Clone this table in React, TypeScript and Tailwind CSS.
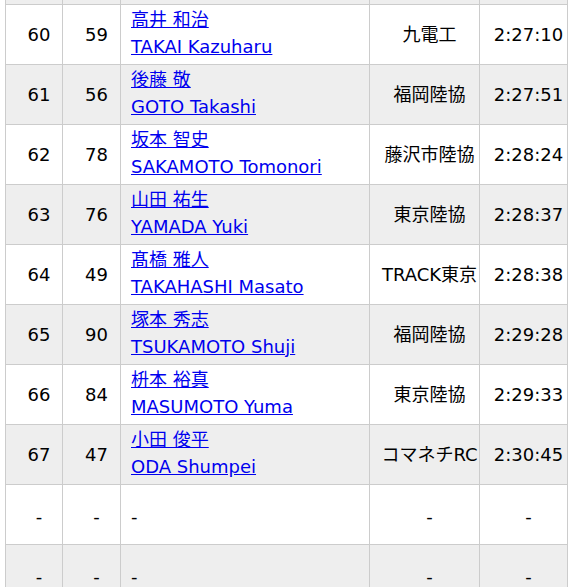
type Row = {
  place: string;
  bib: string;
  ja?: string;
  en?: string;
  team: string;
  time: string;
};

const rows: Row[] = [
  { place: '60', bib: '59', ja: '高井 和治', en: 'TAKAI Kazuharu', team: '九電工', time: '2:27:10' },
  { place: '61', bib: '56', ja: '後藤 敬', en: 'GOTO Takashi', team: '福岡陸協', time: '2:27:51' },
  { place: '62', bib: '78', ja: '坂本 智史', en: 'SAKAMOTO Tomonori', team: '藤沢市陸協', time: '2:28:24' },
  { place: '63', bib: '76', ja: '山田 祐生', en: 'YAMADA Yuki', team: '東京陸協', time: '2:28:37' },
  { place: '64', bib: '49', ja: '髙橋 雅人', en: 'TAKAHASHI Masato', team: 'TRACK東京', time: '2:28:38' },
  { place: '65', bib: '90', ja: '塚本 秀志', en: 'TSUKAMOTO Shuji', team: '福岡陸協', time: '2:29:28' },
  { place: '66', bib: '84', ja: '枡本 裕真', en: 'MASUMOTO Yuma', team: '東京陸協', time: '2:29:33' },
  { place: '67', bib: '47', ja: '小田 俊平', en: 'ODA Shumpei', team: 'コマネチRC', time: '2:30:45' },
  { place: '-', bib: '-', team: '-', time: '-' },
  { place: '-', bib: '-', team: '-', time: '-' },
];

const font = { fontFamily: '"DejaVu Sans", "Noto Sans CJK JP", sans-serif' };

export default function App() {
  return (
    <div className="min-h-screen bg-white text-[18px] leading-[27px] text-black" style={font}>
      <div className="ml-[5px] grid w-fit grid-cols-[56px_57px_248px_109px_87px] grid-rows-[4px] auto-rows-[59px] gap-px bg-[#ccc] px-px pb-px">
        {/* tail of the previous row */}
        <div className="bg-[#eee]" />
        <div className="bg-[#eee]" />
        <div className="bg-[#eee]" />
        <div className="bg-[#eee]" />
        <div className="bg-[#eee]" />

        {rows.map((r, i) => {
          const bg = i % 2 === 0 ? 'bg-white' : 'bg-[#eee]';
          const dash = !r.en;
          const cell = `${bg} flex items-center justify-center pl-[10px] ${dash ? 'pt-[3px]' : ''}`;
          return [
            <div key={`${i}-p`} className={cell}>{r.place}</div>,
            <div key={`${i}-b`} className={cell}>{r.bib}</div>,
            dash ? (
              <div key={`${i}-n`} className={`${bg} flex items-center pl-[10px] pt-[3px]`}>-</div>
            ) : (
              <div key={`${i}-n`} className={`${bg} flex flex-col justify-center pl-[10px] pb-[4px]`}>
                <a href="#" className="w-fit text-[#0000ee] underline">{r.ja}</a>
                <a href="#" className="w-fit text-[#0000ee] underline">{r.en}</a>
              </div>
            ),
            <div key={`${i}-t`} className={`${cell} whitespace-nowrap`}>{r.team}</div>,
            <div key={`${i}-r`} className={cell}>{r.time}</div>,
          ];
        })}
      </div>
    </div>
  );
}
